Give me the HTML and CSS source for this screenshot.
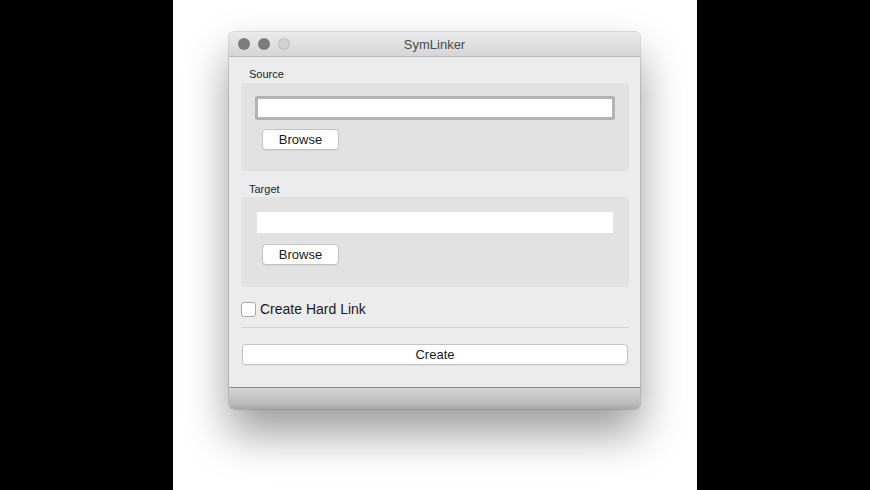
FILE: index.html
```html
<!DOCTYPE html>
<html>
<head>
    <meta charset="UTF-8">
    <title>SymLinker</title>
    <link rel="stylesheet" href="styles.css">
</head>
<body>
    <div class="stage">
        <div class="window">
            <div class="titlebar">
                <div class="lights">
                    <span class="light close"></span>
                    <span class="light min"></span>
                    <span class="light zoom"></span>
                </div>
                <div class="title">SymLinker</div>
            </div>

            <div class="content">
                <div class="group-label">Source</div>
                <div class="group">
                    <input type="text" class="field focused">
                    <button class="btn browse">Browse</button>
                </div>

                <div class="group-label target">Target</div>
                <div class="group second">
                    <input type="text" class="field plain">
                    <button class="btn browse">Browse</button>
                </div>

                <label class="check">
                    <span class="box"></span>
                    <span>Create Hard Link</span>
                </label>

                <div class="separator"></div>

                <button class="btn create">Create</button>
            </div>

            <div class="bottombar"></div>
        </div>
    </div>
</body>
</html>
```

FILE: styles.css
```css
body {
    margin: 0;
    background-color: #000;
    font-family: "Liberation Sans", Arial, sans-serif;
    height: 490px;
    overflow: hidden;
}

.stage {
    width: 524px;
    height: 490px;
    margin-left: 173px;
    background-color: #fff;
    padding: 32px 0 0 56px;
    box-sizing: border-box;
}

.window {
    width: 411px;
    border-radius: 5px;
    overflow: hidden;
    background-color: #ececec;
    box-shadow: 0 0 0 1px rgba(0, 0, 0, 0.12), 0 24px 45px rgba(0, 0, 0, 0.4);
}

.titlebar {
    position: relative;
    height: 24px;
    background: linear-gradient(#ebebeb, #d5d5d5);
    border-bottom: 1px solid #bdbdbd;
    display: flex;
    align-items: center;
    justify-content: center;
}

.lights {
    position: absolute;
    left: 9px;
    top: 6px;
    display: flex;
    gap: 8px;
}

.light {
    width: 12px;
    height: 12px;
    border-radius: 50%;
    background-color: #7c7c7c;
}

.light.zoom {
    background-color: #d0d0d0;
    box-shadow: inset 0 0 0 1px #c2c2c2;
}

.title {
    font-size: 13px;
    color: #4a4a4a;
}

.content {
    padding: 11px 11px 22px 12px;
}

.group-label {
    font-size: 11px;
    color: #1e1e1e;
    padding-left: 8px;
    height: 14px;
}

.group-label.target {
    margin-top: 12px;
}

.group {
    margin-top: 1px;
    background-color: #e2e2e2;
    border-radius: 4px;
    padding: 13px 14px 21px 14px;
    display: flex;
    flex-direction: column;
    align-items: flex-start;
}

.group.second {
    margin-top: 0;
    padding-top: 15px;
    padding-bottom: 22px;
}

.field {
    width: 100%;
    box-sizing: border-box;
    background-color: #fff;
    margin: 0;
    outline: none;
}

.field.focused {
    height: 24px;
    border: 3px solid #b3b3b3;
    border-radius: 2px;
}

.field.plain {
    height: 21px;
    border: none;
    margin: 0 2px;
    width: calc(100% - 4px);
}

.btn {
    font-family: "Liberation Sans", Arial, sans-serif;
    font-size: 13px;
    color: #1a1a1a;
    background-color: #fff;
    border: 1px solid #c3c3c3;
    border-radius: 4px;
    height: 21px;
    padding: 0;
    box-shadow: 0 1px 0 rgba(0, 0, 0, 0.05);
}

.btn.browse {
    width: 77px;
    margin: 9px 0 0 7px;
}

.group.second .btn.browse {
    margin-top: 11px;
}

.check {
    display: flex;
    align-items: center;
    gap: 4px;
    margin-top: 14px;
    font-size: 14px;
    color: #1a1a1a;
}

.check .box {
    width: 13px;
    height: 13px;
    background-color: #fff;
    border: 1px solid #a8a8a8;
    border-radius: 3px;
}

.separator {
    height: 1px;
    background-color: #d2d2d2;
    margin-top: 10px;
}

.btn.create {
    display: block;
    width: 386px;
    margin: 16px 0 0 1px;
}

.bottombar {
    height: 21px;
    border-top: 1px solid #8a8a8a;
    background: linear-gradient(#d6d6d6, #bcbcbc 70%, #a9a9a9);
}
```
